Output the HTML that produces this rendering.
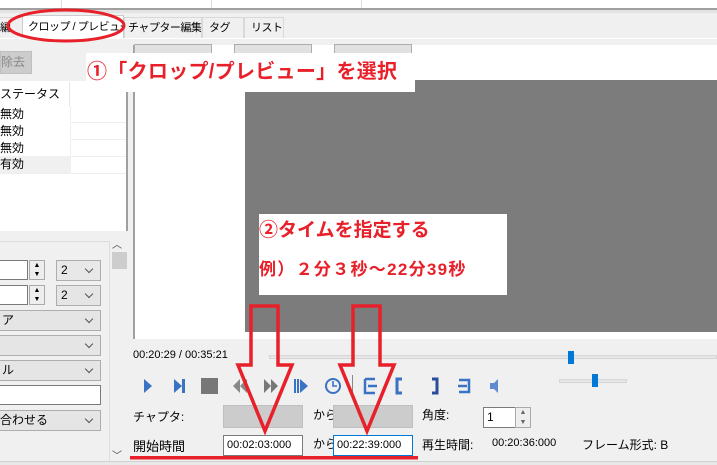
<!DOCTYPE html>
<html><head><meta charset="utf-8"><style>
*{margin:0;padding:0;box-sizing:border-box}
body{width:717px;height:465px;overflow:hidden;background:#f0f0f0;position:relative;font-family:"Liberation Sans","Noto Sans CJK JP",sans-serif;font-size:12px;color:#000}
.a{position:absolute;white-space:nowrap}
.tab{position:absolute;top:17px;height:21px;border:1px solid #d9d9d9;border-bottom:none;background:#f0f0f0;font-size:11px;line-height:20px;padding-left:5px;white-space:nowrap;overflow:hidden;letter-spacing:-0.5px}
.dd{position:absolute;background:#e5e5e5;border:1px solid #adadad;height:21px;font-size:12px;line-height:19px;padding-left:4px;white-space:nowrap;overflow:hidden}
.dd:after{content:"";position:absolute;right:8px;top:5px;width:5px;height:5px;border-right:1px solid #555;border-bottom:1px solid #555;transform:rotate(45deg)}
.inp{position:absolute;background:#fff;border:1px solid #7a7a7a;height:21px;font-size:12px;line-height:19px;padding-left:3px;white-space:nowrap}
.red{color:#e8202a;font-weight:bold}
</style></head><body>
<div class="a" style="left:0;top:0;width:717px;height:9px;background:#fff"></div>
<div class="a" style="left:61px;top:0;width:1px;height:9px;background:#ddd"></div>
<div class="a" style="left:211px;top:0;width:1px;height:9px;background:#ddd"></div>
<div class="a" style="left:361px;top:0;width:1px;height:9px;background:#ddd"></div>
<div class="a" style="left:0;top:8px;width:717px;height:2px;background:#a0a0a0"></div>
<div class="a" style="left:0;top:10px;width:717px;height:3px;background:#e3e3e3"></div>
<div class="tab" style="left:-5px;width:28px;padding-left:4px">編</div>
<div class="tab" style="left:22px;width:102px;top:15px;height:24px;background:#fff;border-color:#ccc;line-height:22px;padding-left:5px">クロップ / プレビュー</div>
<div class="tab" style="left:124px;width:78px;padding-left:3px">チャプター編集</div>
<div class="tab" style="left:202px;width:42px;padding-left:6px">タグ</div>
<div class="tab" style="left:244px;width:40px;padding-left:6px">リスト</div>
<div class="a" style="left:0;top:38px;width:717px;height:1px;background:#fff"></div>
<!-- left -->
<div class="a" style="left:0;top:51px;width:32px;height:23px;background:#ccc;border:1px solid #bfbfbf;color:#888;font-size:12px;line-height:21px">除去</div>
<div class="a" style="left:0;top:81px;width:128px;height:150px;background:#fff;border-right:2px solid #a0a0a0"></div>
<div class="a" style="left:0;top:82px;width:70px;height:24px;line-height:24px;font-size:12px">ステータス</div>
<div class="a" style="left:69px;top:82px;width:1px;height:24px;background:#e5e5e5"></div>
<div class="a" style="left:70px;top:106px;width:1px;height:68px;background:#f0f0f0"></div>
<div class="a" style="left:0;top:106px;font-size:12px;line-height:17px">無効<br>無効<br>無効</div>
<div class="a" style="left:70px;top:122px;width:56px;height:1px;background:#eee"></div>
<div class="a" style="left:70px;top:139px;width:56px;height:1px;background:#eee"></div>
<div class="a" style="left:0;top:156px;width:70px;height:17px;background:#f0f0f0;line-height:17px">有効</div>
<div class="a" style="left:70px;top:156px;width:56px;height:1px;background:#eee"></div>
<div class="a" style="left:0;top:173px;width:126px;height:1px;background:#eee"></div>
<div class="a" style="left:0;top:241px;width:110px;height:1px;background:#ddd"></div>
<div class="a" style="left:109px;top:241px;width:1px;height:220px;background:#ddd"></div>
<div class="a" style="left:112px;top:236px;font-size:10px;color:#444">︿</div>
<div class="a" style="left:112px;top:252px;width:15px;height:17px;background:#cdcdcd"></div>
<div class="a" style="left:112px;top:447px;font-size:10px;color:#444">﹀</div>
<div class="inp" style="left:-2px;top:260px;width:30px;height:20px"></div>
<div class="a" style="left:29px;top:260px;width:16px;height:20px;border:1px solid #aaa;background:#eee;font-size:7px;line-height:9px;text-align:center">▲<br>▼</div>
<div class="dd" style="left:56px;top:260px;width:45px;background:#e8e8e8">2</div>
<div class="inp" style="left:-2px;top:285px;width:30px;height:20px"></div>
<div class="a" style="left:29px;top:285px;width:16px;height:20px;border:1px solid #aaa;background:#eee;font-size:7px;line-height:9px;text-align:center">▲<br>▼</div>
<div class="dd" style="left:56px;top:285px;width:45px">2</div>
<div class="dd" style="left:-3px;top:310px;width:104px">ア</div>
<div class="dd" style="left:-3px;top:335px;width:104px"></div>
<div class="dd" style="left:-3px;top:360px;width:104px">ル</div>
<div class="inp" style="left:-3px;top:385px;width:104px;height:20px"></div>
<div class="dd" style="left:-5px;top:410px;width:106px">合わせる</div>
<!-- preview -->
<div class="a" style="left:133px;top:45px;width:584px;height:294px;background:#fff;border-left:2px solid #a0a0a0"></div>
<div class="a" style="left:134px;top:44px;width:78px;height:12px;background:#e1e1e1;border:1px solid #adadad"></div>
<div class="a" style="left:234px;top:44px;width:78px;height:12px;background:#e1e1e1;border:1px solid #adadad"></div>
<div class="a" style="left:334px;top:44px;width:78px;height:12px;background:#e1e1e1;border:1px solid #adadad"></div>
<div class="a" style="left:245px;top:80px;width:472px;height:252px;background:#7c7c7c"></div>
<div class="a" style="left:86px;top:53px;width:329px;height:39px;background:#fff"></div>
<div class="a red" style="left:87px;top:59px;font-size:20px;line-height:26px;letter-spacing:0.3px">①「クロップ/プレビュー」を選択</div>
<div class="a" style="left:259px;top:214px;width:248px;height:81px;background:#fff"></div>
<div class="a red" style="left:259px;top:219px;font-size:19px;line-height:24px">②タイムを指定する</div>
<div class="a red" style="left:259px;top:258px;font-size:17px;line-height:24px;letter-spacing:1.3px">例）２分３秒～22分39秒</div>
<!-- time/seek -->
<div class="a" style="left:133px;top:349px;font-size:11px">00:20:29 / 00:35:21</div>
<div class="a" style="left:269px;top:355px;width:448px;height:4px;background:#e7e7e7;border:1px solid #d6d6d6"></div>
<div class="a" style="left:568px;top:351px;width:6px;height:13px;background:#0078d7"></div>
<div class="a" style="left:559px;top:379px;width:68px;height:4px;background:#e7e7e7;border:1px solid #d6d6d6"></div>
<div class="a" style="left:592px;top:374px;width:6px;height:13px;background:#0078d7"></div>
<svg class="a" style="left:0;top:0" width="717" height="465">
<g fill="#3a72c4">
<polygon points="144,379 152,386 144,393"/>
<polygon points="174,379 182,386 174,393"/><rect x="182" y="379" width="3" height="14"/>
<rect x="201" y="378" width="17" height="16" fill="#777"/>
<polygon points="240,379 233,386 240,393" fill="#888"/><polygon points="247,379 240,386 247,393" fill="#888"/>
<polygon points="264,379 271,386 264,393" fill="#777"/><polygon points="271,379 278,386 271,393" fill="#777"/>
<rect x="294" y="379" width="2" height="14"/><rect x="297" y="379" width="2" height="14"/><polygon points="300,379 308,386 300,393"/>
<circle cx="333" cy="386" r="7" fill="none" stroke="#3a72c4" stroke-width="2"/><path d="M333 381v5h4" stroke="#3a72c4" fill="none" stroke-width="1.6"/>
<rect x="352" y="375" width="1" height="20" fill="#888"/>
<path d="M365 379v14h10M365 379h10M377 386h-9" stroke="#3a72c4" fill="none" stroke-width="2.5"/>
<path d="M402 379h-5v14h5" stroke="#3a72c4" fill="none" stroke-width="3"/>
<path d="M432 379h5v14h-5" stroke="#2a4c9a" fill="none" stroke-width="3"/>
<path d="M459 380h10v12h-10M458 386h9" stroke="#3a72c4" fill="none" stroke-width="2.5"/>
<polygon points="490,383 494,383 498,379 498,393 494,389 490,389" fill="#5d8bd0"/>
</g>
</svg>
<div class="a" style="left:133px;top:408px">チャプタ:</div>
<div class="a" style="left:223px;top:405px;width:80px;height:23px;background:#ccc;border:1px solid #bfbfbf"></div>
<div class="a" style="left:313px;top:406px">から</div>
<div class="a" style="left:333px;top:405px;width:80px;height:23px;background:#ccc;border:1px solid #bfbfbf"></div>
<div class="a" style="left:422px;top:406px">角度:</div>
<div class="inp" style="left:483px;top:407px;width:33px;height:21px">1</div>
<div class="a" style="left:515px;top:407px;width:16px;height:21px;border:1px solid #aaa;background:#eee;font-size:7px;line-height:10px;text-align:center;color:#666">▲<br>▼</div>
<div class="a" style="left:133px;top:436px;font-size:13px">開始時間</div>
<div class="inp" style="left:223px;top:435px;width:80px;font-size:11px">00:02:03:000</div>
<div class="a" style="left:313px;top:435px">から</div>
<div class="inp" style="left:333px;top:435px;width:80px;font-size:11px;border-color:#0078d7">00:22:39:000</div>
<div class="a" style="left:422px;top:436px">再生時間:</div>
<div class="a" style="left:492px;top:437px;font-size:11px">00:20:36:000</div>
<div class="a" style="left:582px;top:436px">フレーム形式: B</div>
<div class="a" style="left:0;top:461px;width:717px;height:4px;background:#e8e8e8;border-top:1px solid #d0d0d0"></div>
<svg class="a" style="left:0;top:0" width="717" height="465">
<g fill="none" stroke="#e8202a" stroke-width="3.5">
<ellipse cx="66" cy="25.5" rx="58" ry="15.5" stroke-width="3"/>
<polygon points="251,306 278,306 278,365 292,365 265,431 238,365 251,365"/>
<polygon points="353,306 380,306 380,365 394,365 367,431 340,365 353,365"/>
</g>
<rect x="130" y="456" width="288" height="3.5" fill="#e8202a"/>
</svg>
</body></html>
